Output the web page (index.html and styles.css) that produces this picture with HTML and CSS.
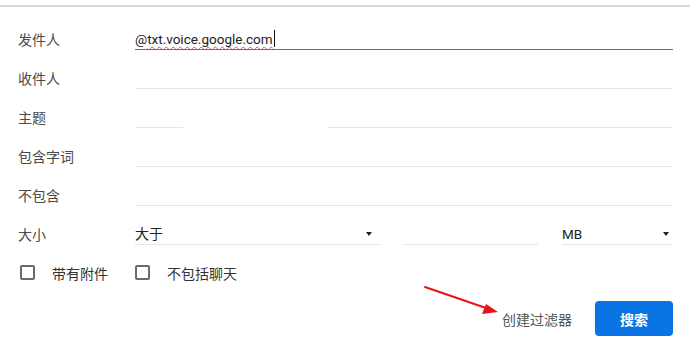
FILE: index.html
```html
<!DOCTYPE html>
<html lang="zh-CN">
<head>
<meta charset="utf-8">
<title>搜索过滤</title>
<link rel="stylesheet" href="styles.css">
</head>
<body>
<div class="panel">
  <div class="form">
    <div class="row">
      <div class="label">发件人</div>
      <div class="field field-active"><span class="at">@</span><span class="spell">txt.voice.google.com</span><span class="caret"></span></div>
    </div>
    <div class="row">
      <div class="label">收件人</div>
      <div class="field"></div>
    </div>
    <div class="row">
      <div class="label">主题</div>
      <div class="field field-broken"></div>
    </div>
    <div class="row">
      <div class="label">包含字词</div>
      <div class="field"></div>
    </div>
    <div class="row">
      <div class="label">不包含</div>
      <div class="field"></div>
    </div>
    <div class="row">
      <div class="label">大小</div>
      <div class="size-group">
        <div class="field select select-op">大于<span class="caret-down"></span></div>
        <div class="field number"></div>
        <div class="field select select-unit">MB<span class="caret-down"></span></div>
      </div>
    </div>
    <div class="checks">
      <label class="check"><span class="box"></span><span class="check-text">带有附件</span></label>
      <label class="check"><span class="box"></span><span class="check-text">不包括聊天</span></label>
    </div>
    <div class="actions">
      <span class="filter-link">创建过滤器</span>
      <button class="search-btn">搜索</button>
    </div>
  </div>
  <svg class="annot-arrow" width="100" height="40" viewBox="0 0 100 40" aria-hidden="true">
    <line x1="5" y1="7" x2="66" y2="28" stroke="#e8141b" stroke-width="2" stroke-linecap="round"/>
    <polygon points="78,32 62,34 66,24" fill="#e8141b"/>
  </svg>
</div>
</body>
</html>
```
FILE: styles.css
```css
* { box-sizing: border-box; }
html, body {
  margin: 0;
  padding: 0;
  background: #fff;
}
body {
  font-family: Roboto, "Noto Sans CJK SC", "Noto Sans", sans-serif;
  font-size: 14px;
  color: #222;
}
.panel {
  position: relative;
  width: 690px;
  height: 358px;
  padding-top: 5px;
}
.form {
  border-top: 2px solid #d7d7d7;
  padding: 12px 17px 0 18px;
}
.row {
  display: grid;
  grid-template-columns: 117px 1fr;
  align-items: center;
  height: 39px;
}
.label {
  color: #4a4a4a;
  font-size: 14px;
}
.field {
  height: 22px;
  line-height: 20px;
  padding-top: 1px;
  border-bottom: 1px solid #e6e6e6;
  font-size: 13px;
  color: #222;
  display: flex;
  align-items: center;
}
.field-active {
  border-bottom: 1px solid #2a7fd0;
  font-size: 13.5px;
}
.spell {
  text-decoration-line: underline;
  text-decoration-style: wavy;
  text-decoration-color: rgba(200, 30, 80, 0.7);
  text-decoration-thickness: 1px;
  text-decoration-skip-ink: none;
  text-underline-offset: 2px;
}
.caret {
  display: inline-block;
  width: 1px;
  height: 17px;
  background: #111;
  margin-left: 1px;
}
.field-broken {
  border-bottom: none;
  background: linear-gradient(to right, #e6e6e6 0, #e6e6e6 48px, transparent 48px, transparent 192px, #e6e6e6 192px) left bottom / 100% 1px no-repeat;
}
.size-group {
  display: flex;
  gap: 24px;
}
.select {
  justify-content: space-between;
  font-size: 14px;
}
.select-op { width: 245px; padding-right: 8px; }
.number { width: 134px; }
.select-unit { width: 111px; padding-right: 4px; font-size: 13.5px; }
.caret-down {
  width: 0;
  height: 0;
  border-left: 3.5px solid transparent;
  border-right: 3.5px solid transparent;
  border-top: 4px solid #222;
}
.checks {
  display: flex;
  align-items: center;
  height: 39px;
  padding-left: 2px;
  gap: 27px;
}
.check {
  display: flex;
  align-items: center;
  color: #333;
  font-size: 14px;
}
.box {
  width: 15px;
  height: 15px;
  border: 2px solid #6a6a6a;
  border-radius: 2px;
  margin-right: 17px;
}
.actions {
  display: flex;
  justify-content: flex-end;
  align-items: center;
  gap: 23px;
  margin-top: 9px;
}
.filter-link {
  color: #555;
  font-size: 14px;
}
.search-btn {
  width: 78px;
  height: 35px;
  border: none;
  border-radius: 4px;
  background: #0b74e5;
  color: #fff;
  font-family: "Noto Sans CJK SC", sans-serif;
  font-size: 14px;
  font-weight: 700;
  padding: 0;
}
.annot-arrow {
  position: absolute;
  left: 420px;
  top: 280px;
}
```
